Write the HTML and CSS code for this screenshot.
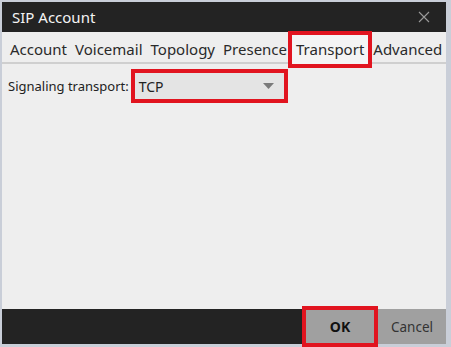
FILE: index.html
```html
<!DOCTYPE html>
<html>
<head>
<meta charset="utf-8">
<link rel="stylesheet" href="styles.css">
</head>
<body>
<div class="window">
  <div class="titlebar">
    <span class="title">SIP Account</span>
    <svg class="close" width="12" height="12" viewBox="0 0 12 12"><path d="M1 1L11 11M11 1L1 11" stroke="#9a9a9a" stroke-width="1.1" fill="none"/></svg>
  </div>
  <div class="tabs">
    <span class="tab">Account</span>
    <span class="tab">Voicemail</span>
    <span class="tab">Topology</span>
    <span class="tab">Presence</span>
    <span class="tab active">Transport</span>
    <span class="tab">Advanced</span>
  </div>
  <div class="content">
    <div class="row">
      <span class="label">Signaling transport:</span>
      <div class="select">
        <span>TCP</span>
        <svg class="arrow" width="11" height="6" viewBox="0 0 11 6"><path d="M0 0H11L5.5 6Z" fill="#7a7a7a"/></svg>
      </div>
    </div>
  </div>
  <div class="footer">
    <div class="spacer"></div>
    <div class="buttons">
      <div class="btn ok">OK</div>
      <div class="btn cancel">Cancel</div>
    </div>
  </div>
</div>
</body>
</html>
```
FILE: styles.css
```css
html, body {
  margin: 0;
  padding: 0;
}
body {
  background: #c9ced8;
  width: 451px;
  height: 347px;
  overflow: hidden;
  font-family: "Noto Sans", "Open Sans", sans-serif;
}
.window {
  margin: 2px 0 0 2px;
  width: 444px;
  background: #eeeeee;
  display: flex;
  flex-direction: column;
}
.titlebar {
  height: 30px;
  background: #232323;
  display: flex;
  align-items: center;
  justify-content: space-between;
  padding: 0 16px 0 10px;
}
.title {
  color: #f4f4f4;
  font-size: 15px;
}
.close {
  display: block;
}
.tabs {
  height: 30px;
  display: flex;
  align-items: center;
  padding-left: 4px;
  border-bottom: 2px solid #cfcfcf;
  font-size: 15px;
  color: #2a2a2a;
}
.tab {
  padding: 4px 4px 0;
  line-height: 26px;
  white-space: nowrap;
}
.tab.active {
  border: 4px solid #e1141f;
  line-height: 27px;
  padding: 1px 4px 0;
  margin: 0 -3px;
  position: relative;
  top: 2px;
  height: 28px;
  background: #f4f4f4;
}
.content {
  height: 245px;
  padding: 5px 0 0 6px;
  box-sizing: border-box;
}
.row {
  display: flex;
  align-items: center;
  font-size: 13px;
  color: #222;
}
.select {
  margin-left: 2px;
  width: 157px;
  height: 34px;
  box-sizing: border-box;
  border: 4px solid #e1141f;
  background: #e4e4e4;
  display: flex;
  align-items: center;
  justify-content: space-between;
  padding: 0 10px 0 4px;
  font-size: 14px;
}
.arrow {
  display: block;
}
.footer {
  height: 35px;
  display: flex;
  background: #232323;
}
.spacer {
  flex: 1;
}
.buttons {
  width: 143px;
  background: #a0a0a0;
  display: flex;
  align-items: stretch;
}
.btn {
  font-size: 14px;
  display: flex;
  align-items: center;
  justify-content: center;
}
.ok {
  width: 76px;
  box-sizing: border-box;
  border: 4px solid #e1141f;
  margin: -3px 0 -3px -1px;
  font-weight: bold;
  color: #111;
}
.cancel {
  flex: 1;
  color: #333;
  font-size: 13.5px;
}
```
